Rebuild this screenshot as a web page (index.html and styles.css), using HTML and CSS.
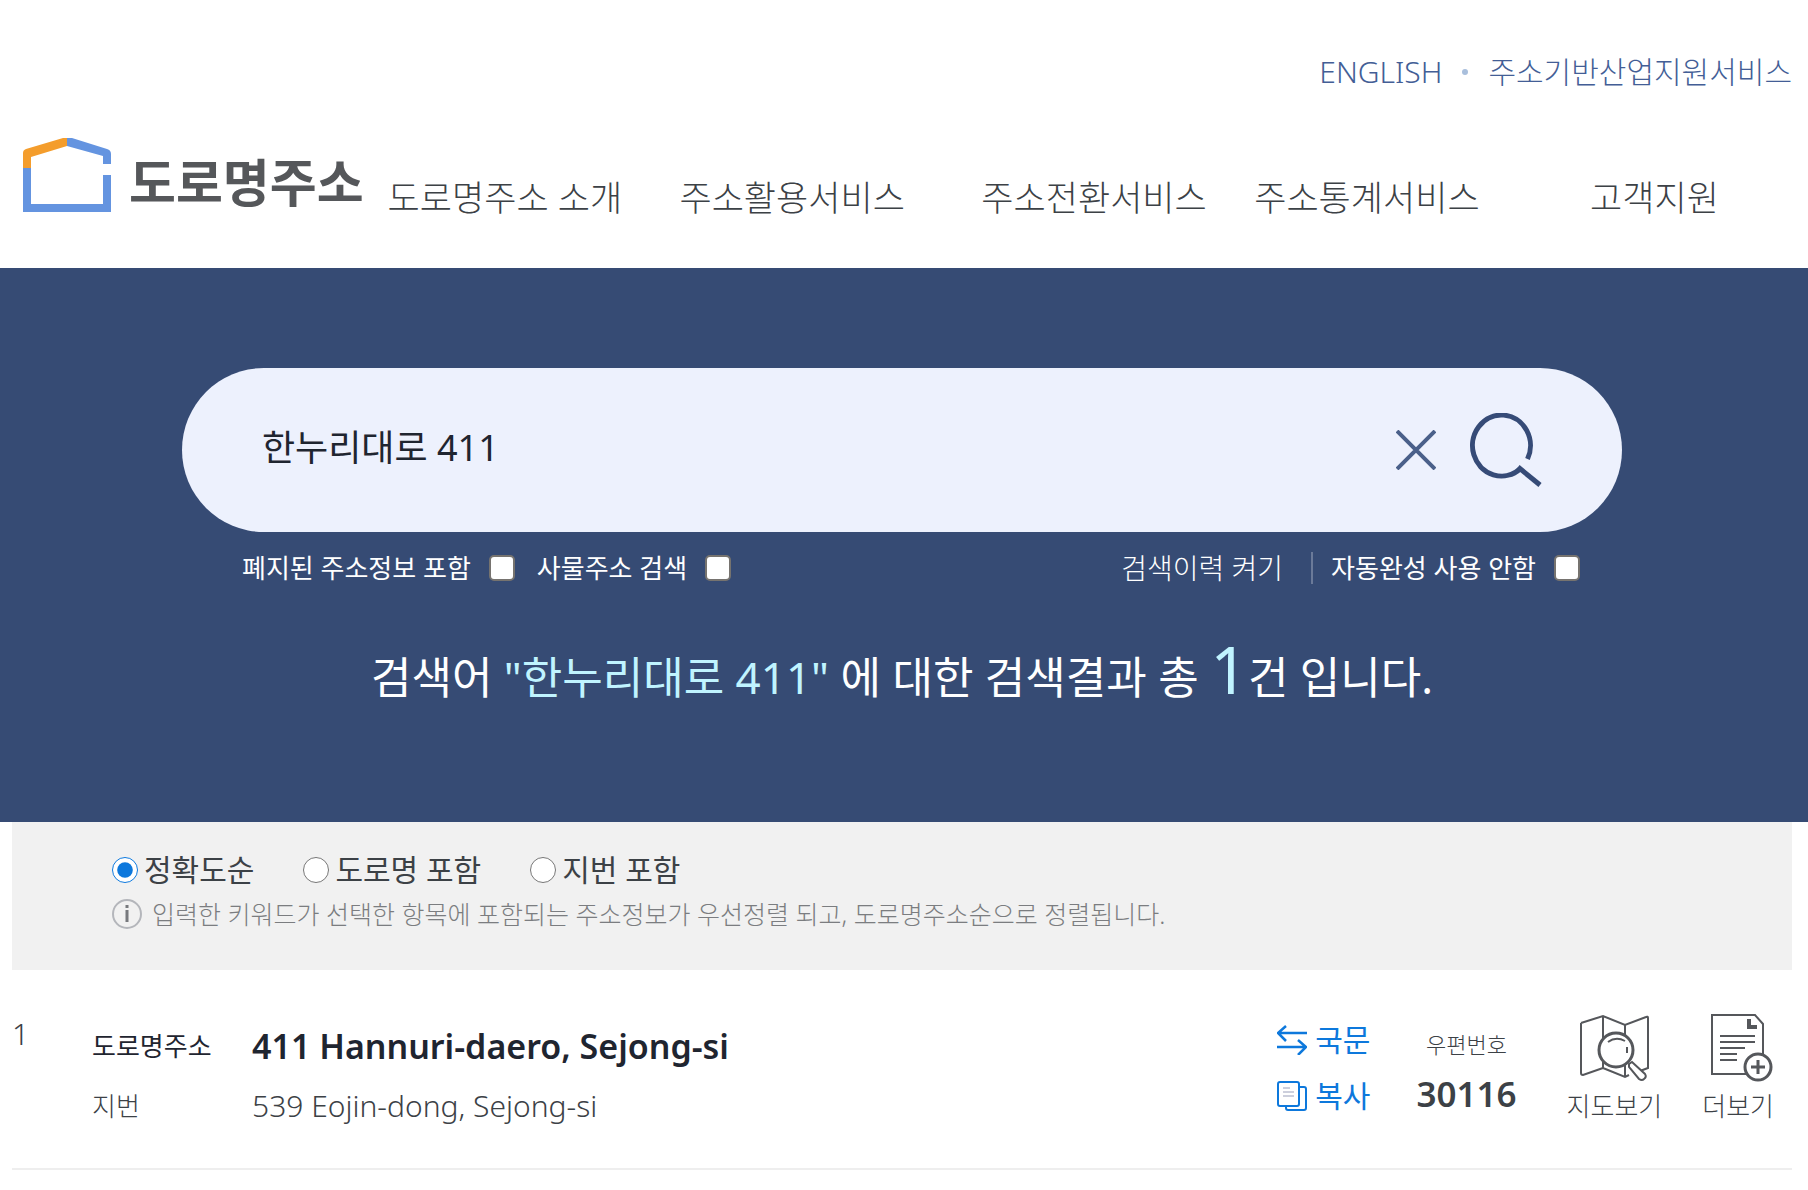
FILE: index.html
```html
<!DOCTYPE html>
<html lang="ko">
<head>
  <meta charset="utf-8">
  <meta name="viewport" content="width=device-width">
  <title>도로명주소</title>
  <link rel="stylesheet" href="styles.css">
</head>

<body>
  <header class="header">
    <div class="util">
      <a href="#">ENGLISH</a>
      <span class="dot"></span>
      <a href="#">주소기반산업지원서비스</a>
    </div>
    <div class="header-main">
      <a class="logo" href="#">
        <svg class="logo-mark" viewBox="0 0 88 74" aria-hidden="true">
          <path fill="#f49d2c" d="M0 30V15Q0 12 3 11L40 0h4v8L8 19V30z"/>
          <path fill="#6494e0" d="M44 0h5L84 11q4 1 4 5v10h-8V18L44 8z"/>
          <path fill="#6494e0" d="M0 30h8v36h72V37h8v37H0z"/>
        </svg>
        <span class="logo-text">도로명주소</span>
      </a>
      <nav class="nav">
        <a href="#">도로명주소 소개</a>
        <a href="#">주소활용서비스</a>
        <a href="#">주소전환서비스</a>
        <a href="#">주소통계서비스</a>
        <a href="#">고객지원</a>
      </nav>
    </div>
  </header>

  <main>
    <section class="search">
      <form class="search-form">
        <div class="search-box">
          <input class="search-input" type="text" value="한누리대로 411" aria-label="주소 검색">
          <button class="icon-button" type="button" aria-label="지우기">
            <svg class="icon-clear" viewBox="0 0 40 40">
              <path d="M1 1l38 38M39 1L1 39" fill="none" stroke="#4a608a" stroke-width="4"/>
            </svg>
          </button>
          <button class="icon-button" type="submit" aria-label="검색">
            <svg class="icon-search" viewBox="0 0 74 74">
              <path d="M59.500 46A29 30.500 0 1 0 52 56" fill="none" stroke="#364b77" stroke-width="5"/>
              <path d="M50 54L72 72" fill="none" stroke="#364b77" stroke-width="5"/>
            </svg>
          </button>
        </div>
        <div class="options">
          <label class="option">폐지된 주소정보 포함 <input type="checkbox"></label>
          <label class="option">사물주소 검색 <input type="checkbox"></label>
          <a class="history" href="#">검색이력 켜기</a>
          <label class="option option-auto">자동완성 사용 안함 <input type="checkbox"></label>
        </div>
      </form>
      <p class="summary">검색어 <em>"한누리대로 411"</em> 에 대한 검색결과 총 <em class="count">1</em>건 입니다.</p>
    </section>

    <section class="sort">
      <div class="sort-list">
        <label><input type="radio" name="sort" checked>정확도순</label>
        <label><input type="radio" name="sort">도로명 포함</label>
        <label><input type="radio" name="sort">지번 포함</label>
      </div>
      <p class="sort-note">
        <svg class="icon-info" viewBox="0 0 30 30" aria-hidden="true">
          <circle cx="15" cy="15" r="14" fill="none" stroke="#b4b6bb" stroke-width="2"/>
          <path d="M15 11v12M15 6v3" stroke="#77797d" stroke-width="3"/>
        </svg>
        입력한 키워드가 선택한 항목에 포함되는 주소정보가 우선정렬 되고, 도로명주소순으로 정렬됩니다.
      </p>
    </section>

    <article class="result">
      <span class="number">1</span>
      <dl class="address">
        <dt class="road">도로명주소</dt>
        <dd class="road">411 Hannuri-daero, Sejong-si</dd>
        <dt>지번</dt>
        <dd>539 Eojin-dong, Sejong-si</dd>
      </dl>
      <div class="actions">
        <button class="action" type="button">
          <svg class="icon-action" viewBox="0 0 30 30" aria-hidden="true">
            <path d="M30 8H1M9 1L1 8l8 8M0 22h29M21 15l8 7-8 8" fill="none" stroke="#0d78dc" stroke-width="2.500"/>
          </svg>국문
        </button>
        <button class="action" type="button">
          <svg class="icon-action" viewBox="0 0 30 30" aria-hidden="true">
            <path d="M22 6h5q2 0 2 2v19q0 2-2 2H11q-2 0-2-2v-2" fill="none" stroke="#0d78dc" stroke-width="2"/>
            <rect x="1" y="1" width="21" height="24" rx="2" fill="#fff" stroke="#0d78dc" stroke-width="2"/>
            <path d="M6 7h7M6 11h11M6 15h11" stroke="#9a9fba"/>
          </svg>복사
        </button>
      </div>
      <div class="zip">
        <span class="zip-label">우편번호</span>
        <strong class="zip-code">30116</strong>
      </div>
      <button class="tool tool-map" type="button">
        <svg class="icon-tool" viewBox="0 0 70 70" aria-hidden="true">
          <g fill="none" stroke="#55575b" stroke-width="2">
            <path d="M2 9l22-7 22 9 21-8q2-1 2 1v50l-8 3M24 2v52L4 61q-2 0-2-2V9M24 54l22 9 4-2M46 11v52"/>
            <circle cx="37" cy="36" r="17" fill="#fff" stroke-width="3"/>
            <path d="M29 28q8-6 17-1M48 33v6M50 50l3-2 13 12q2 3-1 5-2 2-5 0L50 53z" fill="#fff"/>
          </g>
        </svg>
        지도보기
      </button>
      <button class="tool" type="button">
        <svg class="icon-tool" viewBox="0 0 70 70" aria-hidden="true">
          <g fill="none" stroke="#55575b" stroke-width="2">
            <path d="M43 60H9V1h43l8 9v30"/>
            <path d="M46 5v8h8" stroke-width="4"/>
            <path d="M17 22h35M17 28h35M17 34h25M17 40h17M17 46h17"/>
            <circle cx="55" cy="53" r="13" fill="#fff" stroke-width="3"/>
            <path d="M55 46v14M48 53h14" stroke-width="3"/>
          </g>
        </svg>
        더보기
      </button>
    </article>
  </main>
</body>
</html>
```
FILE: styles.css
```css
:root {
  --navy: #364b74;
  --blue: #0d78dc;
  --ink: #3c4146;
}

* {
  box-sizing: border-box;
}

body {
  margin: 0;
  background-color: white;
  color: var(--ink);
  font-family: "Noto Sans", "Noto Sans CJK KR", sans-serif;
  font-weight: 300;
  font-size: 30px;
  line-height: 40px;
}

a {
  color: inherit;
  text-decoration: none;
}

button, input {
  margin: 0;
  color: inherit;
  font: inherit;
}

button {
  border: 0;
  padding: 0;
  background: none;
  cursor: pointer;
}

svg {
  display: block;
  flex: none;
}

p, dl, dd {
  margin: 0;
}

/* header */
.header {
  padding: 52px 16px 50px 23px;
}

.util {
  display: flex;
  justify-content: flex-end;
  align-items: center;
  gap: 20px;
  color: #435e96;
}

.dot {
  width: 6px;
  height: 6px;
  border-radius: 50%;
  background-color: #a9bfdc;
}

.header-main {
  display: flex;
  align-items: flex-start;
  gap: 24px;
  padding-top: 46px;
}

.logo {
  display: flex;
  gap: 18px;
}

.logo-mark {
  width: 88px;
  height: 74px;
}

.logo-text {
  padding-top: 12px;
  color: #55575a;
  font-size: 51px;
  font-weight: 700;
  line-height: 64px;
  white-space: nowrap;
}

.nav {
  flex: 1;
  display: grid;
  grid-template-columns: 292fr 302fr 273fr 336fr 202fr;
  padding-top: 40px;
  font-size: 35px;
  white-space: nowrap;
}

/* search */
.search {
  padding: 100px 186px 105px 182px;
  background-color: var(--navy);
  color: white;
}

.search-box {
  display: flex;
  align-items: center;
  gap: 32px;
  height: 164px;
  padding: 0 80px;
  border-radius: 82px;
  background-color: #edf1fd;
}

.search-input {
  flex: 1;
  min-width: 0;
  border: 0;
  padding: 0 0 4px;
  outline: 0;
  background: none;
  color: #1f2530;
  font-size: 36px;
  font-weight: 400;
}

.icon-clear {
  width: 40px;
  height: 40px;
}

.icon-search {
  width: 74px;
  height: 74px;
}

.options {
  display: flex;
  align-items: center;
  gap: 22px;
  padding: 16px 42px 0 60px;
  font-size: 26px;
}

.option {
  display: flex;
  align-items: center;
  gap: 18px;
  font-weight: 400;
}

.option input {
  appearance: none;
  width: 26px;
  height: 26px;
  border: 2px solid #76736f;
  border-radius: 5px;
  background-color: white;
}

.option input:checked {
  background-color: var(--blue);
}

.history {
  margin-left: auto;
  font-size: 28px;
}

.option-auto::before {
  content: "";
  width: 2px;
  height: 32px;
  margin-left: 6px;
  background-color: #6b7a99;
}

.summary {
  padding-top: 40px;
  font-size: 44px;
  font-weight: 400;
  line-height: 80px;
  text-align: center;
}

.summary em {
  color: #c0f4ff;
  font-style: normal;
}

.summary .count {
  font-size: 66px;
}

/* sort */
.sort {
  margin: 0 16px 0 12px;
  padding: 28px 100px 36px;
  background-color: #f1f1f1;
}

.sort-list {
  display: flex;
  gap: 49px;
}

.sort-list label {
  display: flex;
  align-items: center;
  gap: 6px;
  font-weight: 400;
}

.sort-list input {
  width: 26px;
  height: 26px;
  accent-color: var(--blue);
}

.sort-note {
  display: flex;
  align-items: center;
  gap: 10px;
  padding-top: 4px;
  color: #7b7d80;
  font-size: 25px;
}

.icon-info {
  width: 30px;
  height: 30px;
}

/* result */
.result {
  display: flex;
  align-items: flex-start;
  margin: 0 16px 0 12px;
  padding: 44px 18px 42px 0;
  border-bottom: 2px solid #eee;
}

.number {
  width: 80px;
}

.address {
  flex: 1;
  display: grid;
  grid-template-columns: 160px 1fr;
  row-gap: 20px;
  padding-top: 12px;
}

.address dt {
  font-size: 26px;
}

.address .road {
  color: #1f2530;
  font-weight: 400;
}

.address dd.road {
  font-size: 34px;
  font-weight: 600;
}

.actions {
  display: flex;
  flex-direction: column;
  gap: 16px;
  padding-top: 6px;
}

.action {
  display: flex;
  align-items: center;
  gap: 8px;
  color: var(--blue);
  font-weight: 400;
}

.zip {
  display: flex;
  flex-direction: column;
  align-items: center;
  gap: 10px;
  padding-top: 10px;
  margin: 0 50px 0 46px;
}

.zip-label {
  font-size: 22px;
}

.zip-code {
  font-size: 35px;
  font-weight: 600;
}

.tool {
  display: flex;
  flex-direction: column;
  align-items: center;
  gap: 2px;
  font-size: 26px;
}

.tool-map {
  margin-right: 40px;
}

.icon-action {
  width: 30px;
  height: 30px;
}

.icon-tool {
  width: 70px;
  height: 70px;
}
```
